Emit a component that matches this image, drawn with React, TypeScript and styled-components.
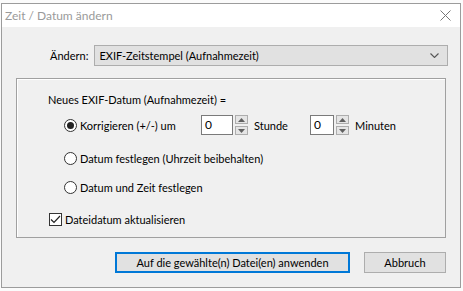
import styled, { createGlobalStyle } from "styled-components";

const Global = createGlobalStyle`
  * { box-sizing: border-box; }
  html, body { margin: 0; padding: 0; }
  body {
    background: #ffffff;
    font-family: Lato, "Liberation Sans", Arial, sans-serif;
    font-size: 11px;
    color: #000;
  }
`;

const Desktop = styled.div`
  width: 463px;
  height: 291px;
  padding: 3px 2px 3px 1px;
  background: #fbfbfb;
`;

const Window = styled.div`
  width: 460px;
  height: 285px;
  display: flex;
  flex-direction: column;
  border: 1px solid #9c9c9c;
  background: #f0f0f0;
`;

const TitleBar = styled.div`
  height: 23px;
  display: flex;
  align-items: center;
  justify-content: space-between;
  background: #ffffff;
  padding: 0 9px 0 3px;
  color: #9a9a9a;
`;

const Title = styled.span`
  font-size: 12px;
`;

const Body = styled.div`
  flex: 1;
  padding: 18px 0 0 14px;
`;

const FieldRow = styled.div`
  display: flex;
  align-items: center;
  gap: 6px;
  padding-left: 34px;
`;

const Combo = styled.div`
  width: 354px;
  height: 21px;
  display: flex;
  align-items: center;
  justify-content: space-between;
  padding: 0 8px 0 4px;
  background: #e1e1e1;
  border: 1px solid #adadad;
`;

const GroupBox = styled.div`
  margin-top: 12px;
  width: 430px;
  height: 160px;
  border: 1px solid #a0a0a0;
  box-shadow: inset 1px 1px 0 #ffffff;
  padding: 14px 0 0 31px;
  display: flex;
  flex-direction: column;
`;

const Caption = styled.div`
  height: 14px;
  line-height: 14px;
`;

const OptionRow = styled.label<{ $top: number; $indent?: number }>`
  display: flex;
  align-items: center;
  margin-top: ${(p) => p.$top}px;
  padding-left: ${(p) => p.$indent ?? 16}px;
  height: 20px;
`;

const OptionText = styled.span<{ $w?: number }>`
  width: ${(p) => (p.$w ? `${p.$w}px` : "auto")};
`;

const Radio = styled.span<{ $checked?: boolean }>`
  width: 13px;
  height: 13px;
  border-radius: 50%;
  border: 1px solid #333;
  background: #fff;
  display: inline-flex;
  align-items: center;
  justify-content: center;
  margin-right: 3px;
  &::after {
    content: "";
    width: 7px;
    height: 7px;
    border-radius: 50%;
    background: ${(p) => (p.$checked ? "#222" : "transparent")};
  }
`;

const Check = styled.span`
  width: 13px;
  height: 13px;
  border: 1px solid #333;
  background: #fff;
  display: inline-flex;
  align-items: center;
  justify-content: center;
  margin-right: 3px;
`;

const SpinGroup = styled.div`
  display: flex;
  align-items: center;
`;

const SpinInput = styled.div<{ $w: number }>`
  width: ${(p) => p.$w}px;
  height: 20px;
  border: 1px solid #7a7a7a;
  background: #fff;
  padding: 2px 0 0 3px;
  line-height: 14px;
  font-size: 12px;
`;

const SpinButtons = styled.div`
  display: flex;
  flex-direction: column;
  gap: 2px;
  margin-left: 2px;
`;

const SpinButton = styled.div`
  width: 13px;
  height: 9px;
  border: 1px solid #adadad;
  background: #e5e5e5;
  display: flex;
  align-items: center;
  justify-content: center;
`;

const SpinLabel = styled.span<{ $w?: number }>`
  margin-left: 6px;
  width: ${(p) => (p.$w ? `${p.$w}px` : "auto")};
`;

const ButtonRow = styled.div`
  display: flex;
  gap: 14px;
  margin-top: 14px;
  padding-left: 99px;
`;

const Button = styled.button<{ $primary?: boolean; $w: number }>`
  width: ${(p) => p.$w}px;
  height: 21px;
  font: inherit;
  color: #000;
  background: #e1e1e1;
  border: ${(p) => (p.$primary ? "2px solid #0078d7" : "1px solid #adadad")};
  padding: 0;
`;

const Tri = ({ up }: { up?: boolean }) => (
  <svg width="7" height="4" viewBox="0 0 7 4">
    <path d={up ? "M0 4 L3.5 0 L7 4 Z" : "M0 0 L3.5 4 L7 0 Z"} fill="#606060" />
  </svg>
);

const Spin = ({ w, label, labelW }: { w: number; label: string; labelW?: number }) => (
  <SpinGroup>
    <SpinInput $w={w}>0</SpinInput>
    <SpinButtons>
      <SpinButton>
        <Tri up />
      </SpinButton>
      <SpinButton>
        <Tri />
      </SpinButton>
    </SpinButtons>
    <SpinLabel $w={labelW}>{label}</SpinLabel>
  </SpinGroup>
);

export default function App() {
  return (
    <>
      <Global />
      <Desktop>
        <Window>
          <TitleBar>
            <Title>Zeit / Datum ändern</Title>
            <svg width="11" height="11" viewBox="0 0 11 11">
              <path d="M0.5 0.5 L10.5 10.5 M10.5 0.5 L0.5 10.5" stroke="#777" strokeWidth="1" />
            </svg>
          </TitleBar>
          <Body>
            <FieldRow>
              <span>Ändern:</span>
              <Combo>
                <span>EXIF-Zeitstempel (Aufnahmezeit)</span>
                <svg width="9" height="5" viewBox="0 0 9 5">
                  <path d="M0.5 0.5 L4.5 4.5 L8.5 0.5" stroke="#555" fill="none" strokeWidth="1.1" />
                </svg>
              </Combo>
            </FieldRow>
            <GroupBox>
              <Caption>Neues EXIF-Datum (Aufnahmezeit) =</Caption>
              <OptionRow $top={8}>
                <Radio $checked />
                <OptionText $w={121}>Korrigieren (+/-) um</OptionText>
                <Spin w={32} label="Stunde" labelW={56} />
                <Spin w={24} label="Minuten" />
              </OptionRow>
              <OptionRow $top={13}>
                <Radio />
                <OptionText>Datum festlegen (Uhrzeit beibehalten)</OptionText>
              </OptionRow>
              <OptionRow $top={9}>
                <Radio />
                <OptionText>Datum und Zeit festlegen</OptionText>
              </OptionRow>
              <OptionRow $top={12} $indent={1}>
                <Check>
                  <svg width="11" height="9" viewBox="0 0 11 9">
                    <path d="M1 4.5 L4 7.5 L10 1" stroke="#222" fill="none" strokeWidth="1.2" />
                  </svg>
                </Check>
                <OptionText>Dateidatum aktualisieren</OptionText>
              </OptionRow>
            </GroupBox>
            <ButtonRow>
              <Button $primary $w={235}>
                Auf die gewählte(n) Datei(en) anwenden
              </Button>
              <Button $w={82}>Abbruch</Button>
            </ButtonRow>
          </Body>
        </Window>
      </Desktop>
    </>
  );
}
